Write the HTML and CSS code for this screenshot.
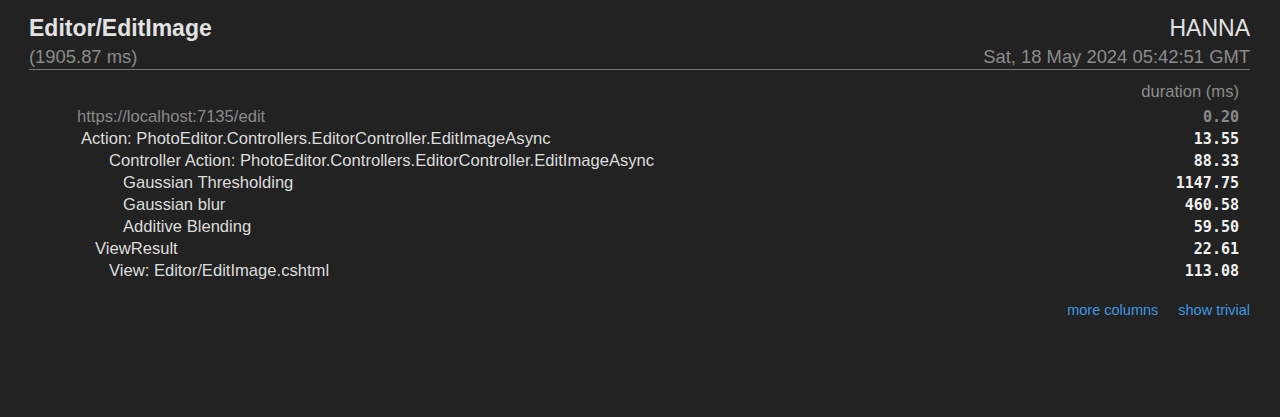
FILE: index.html
```html
<!DOCTYPE html>
<html>
<head>
<meta charset="utf-8">
<link rel="stylesheet" href="styles.css">
</head>
<body>
<div class="popup">
  <div class="head">
    <div class="head-left">
      <div class="name">Editor/EditImage</div>
      <div class="sub">(1905.87 ms)</div>
    </div>
    <div class="head-right">
      <div class="machine">HANNA</div>
      <div class="sub">Sat, 18 May 2024 05:42:51 GMT</div>
    </div>
  </div>
  <table class="timings">
    <thead>
      <tr><th></th><th class="dur-h">duration (ms)</th></tr>
    </thead>
    <tbody>
      <tr class="trivial"><td class="label d0">https://localhost:7135/edit</td><td class="num">0.20</td></tr>
      <tr><td class="label d1">Action: PhotoEditor.Controllers.EditorController.EditImageAsync</td><td class="num">13.55</td></tr>
      <tr><td class="label d3">Controller Action: PhotoEditor.Controllers.EditorController.EditImageAsync</td><td class="num">88.33</td></tr>
      <tr><td class="label d4">Gaussian Thresholding</td><td class="num">1147.75</td></tr>
      <tr><td class="label d4">Gaussian blur</td><td class="num">460.58</td></tr>
      <tr><td class="label d4">Additive Blending</td><td class="num">59.50</td></tr>
      <tr><td class="label d2">ViewResult</td><td class="num">22.61</td></tr>
      <tr><td class="label d3">View: Editor/EditImage.cshtml</td><td class="num">113.08</td></tr>
    </tbody>
  </table>
  <div class="links">
    <a class="link" href="#">more columns</a>
    <a class="link" href="#">show trivial</a>
  </div>
</div>
</body>
</html>
```
FILE: styles.css
```css
html, body {
  margin: 0;
  padding: 0;
  background: #222222;
}
body {
  font-family: "Liberation Sans", Arial, sans-serif;
  color: #dddddd;
  height: 417px;
  overflow: hidden;
}
.popup {
  padding: 15px 30px 0 29px;
}
.head {
  display: flex;
  justify-content: space-between;
  border-bottom: 1px solid #777777;
  padding-bottom: 1px;
}
.head-right {
  text-align: right;
}
.name {
  font-size: 23px;
  font-weight: bold;
  line-height: 26px;
  color: #e2e2e2;
}
.machine {
  font-size: 23px;
  line-height: 26px;
  color: #e2e2e2;
}
.sub {
  margin-top: 5px;
  font-size: 18.4px;
  line-height: 22px;
  color: #8c8c8c;
}
.timings {
  margin-top: 11px;
  width: 100%;
  border-collapse: collapse;
  font-size: 16.6px;
}
.timings th, .timings td {
  padding: 0;
  line-height: 22px;
}
.timings th {
  font-weight: normal;
  padding-bottom: 3px;
}
.dur-h {
  text-align: right;
  color: #8c8c8c;
  padding-right: 11px !important;
}
.label {
  text-align: left;
  white-space: nowrap;
  color: #dddddd;
}
.d0 { padding-left: 48px !important; }
.d1 { padding-left: 52px !important; }
.d2 { padding-left: 66px !important; }
.d3 { padding-left: 80px !important; }
.d4 { padding-left: 94px !important; }
.num {
  text-align: right;
  font-family: "DejaVu Sans Mono", "Liberation Mono", monospace;
  font-weight: bold;
  font-size: 15px;
  color: #f0f0f0;
  padding-right: 11px !important;
}
.trivial .label, .trivial .num {
  color: #8a8a8a;
}
.links {
  margin-top: 18px;
  display: flex;
  justify-content: flex-end;
  gap: 20px;
  line-height: 20px;
}
.link {
  font-size: 14.5px;
  color: #3d98e0;
  text-decoration: none;
}
```
